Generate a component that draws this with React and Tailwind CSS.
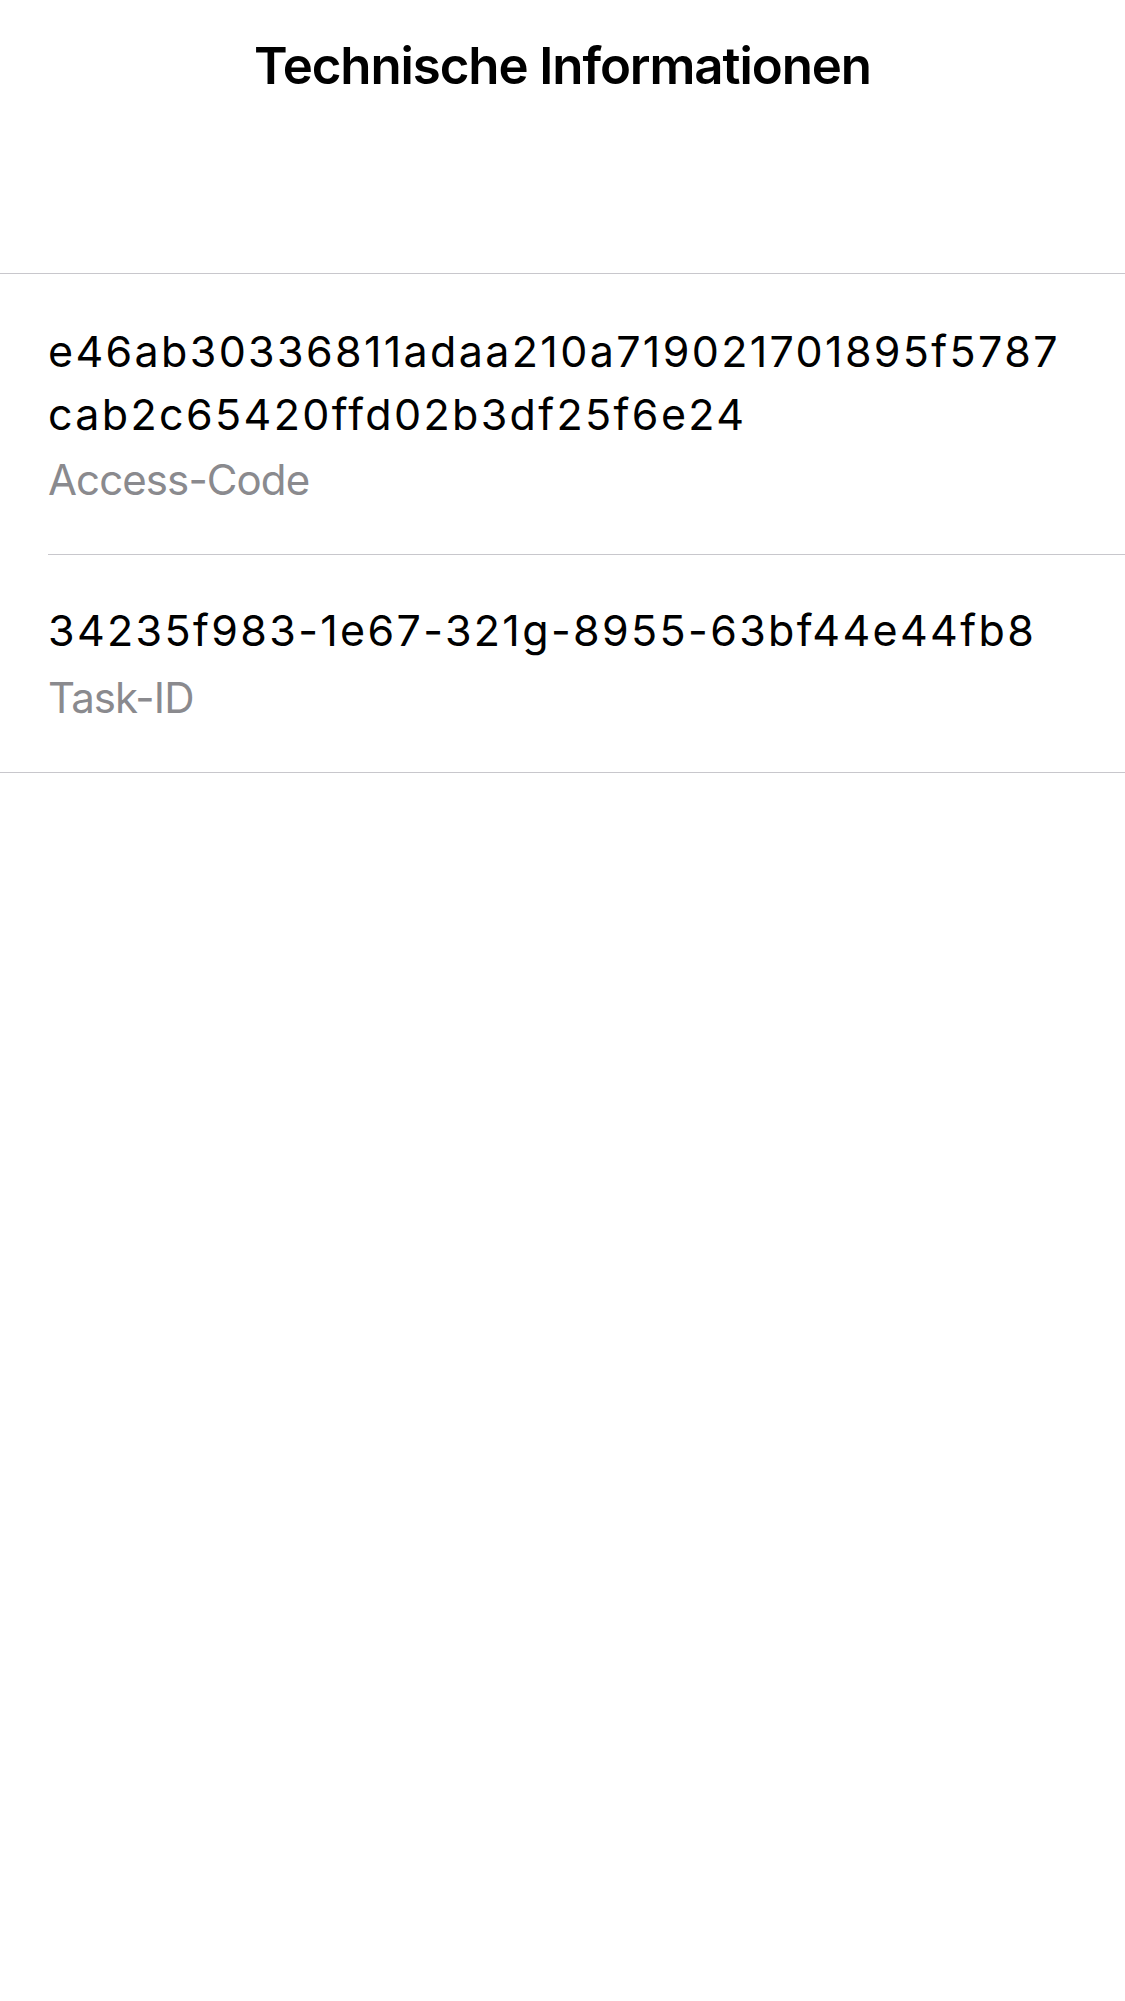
const ROWS = [
  {
    lines: ["e46ab30336811adaa210a719021701895f5787", "cab2c65420ffd02b3df25f6e24"],
    label: "Access-Code",
    pad: "pt-[46px] pb-[43px]",
    labelGap: "mt-[2px]",
  },
  {
    lines: ["34235f983-1e67-321g-8955-63bf44e44fb8"],
    label: "Task-ID",
    pad: "pt-[44px] pb-[43px]",
    labelGap: "mt-[4px]",
  },
];

export default function App() {
  return (
    <div className="min-h-[2001px] w-full bg-white font-['Inter','Liberation_Sans',sans-serif] text-black antialiased">
      <header className="h-[274px] border-b border-[#c8c7cc] pt-[35px] text-center">
        <h1 className="text-[51px] font-semibold leading-[61px] tracking-[-1.1px]">
          Technische Informationen
        </h1>
      </header>

      <ul>
        {ROWS.map((row, i) => (
          <li key={row.label} className="pl-[48px]">
            <div
              className={`${row.pad} ${
                i === ROWS.length - 1 ? "-ml-[48px] pl-[48px]" : ""
              } border-b border-[#c8c7cc]`}
            >
              <div className="text-[43px] leading-[63px] tracking-[2.35px]">
                {row.lines.map((line) => (
                  <span key={line} className="block whitespace-nowrap">
                    {line}
                  </span>
                ))}
              </div>
              <div className={`${row.labelGap} text-[42px] leading-[63px] tracking-[-0.9px] text-[#8a8a8e]`}>
                {row.label}
              </div>
            </div>
          </li>
        ))}
      </ul>
    </div>
  );
}
